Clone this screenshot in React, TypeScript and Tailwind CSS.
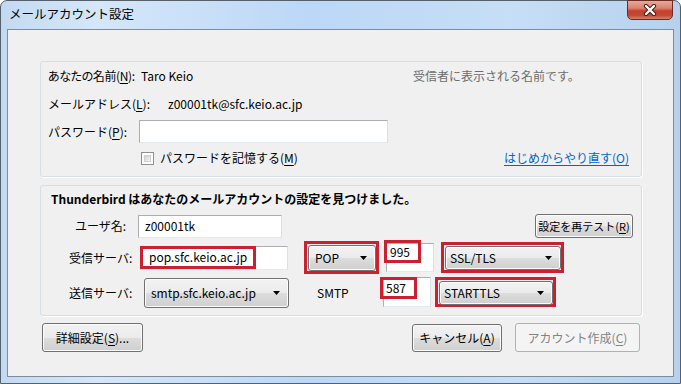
import React from 'react';

const btn =
  'border border-[#707070] rounded-[3px] bg-[linear-gradient(#f2f2f2,#ebebeb_50%,#dddddd_50%,#cfcfcf)] shadow-[inset_0_0_0_1px_#fcfcfc]';
const red = 'border-[3px] border-[#cc1f2f]';
const input = 'bg-white border border-[#abadb3] border-r-[#dbdfe6] border-b-[#e3e9ef]';

function Arrow() {
  return (
    <svg width="7" height="4" viewBox="0 0 7 4" className="shrink-0">
      <path d="M0 0h7L3.5 4z" fill="#000" />
    </svg>
  );
}

function U({ c }: { c: string }) {
  return <span className="underline underline-offset-2">{c}</span>;
}

function Dropdown({ label, w, h, padL, className = '' }: { label: string; w: string; h: string; padL: string; className?: string }) {
  return (
    <div className={`${btn} ${w} ${h} ${padL} pr-[8px] flex items-center justify-between whitespace-nowrap ${className}`}>
      <span>{label}</span>
      <Arrow />
    </div>
  );
}

export default function App() {
  return (
    <div className="w-[681px] h-[384px] bg-white overflow-hidden font-['Noto_Sans_CJK_JP',sans-serif] text-[12px] leading-none text-black whitespace-nowrap">
      <div className="w-full h-full rounded-t-[7px] border border-[#56606c] bg-[linear-gradient(90deg,#c2daf1,#d5e7f9_14%,#bcd8f6_45%,#c6def6_75%,#b7d1ed)] flex flex-col relative">
        {/* title bar */}
        <div className="h-[28px] flex items-center pl-[8px] pb-[1px] text-[12.5px]">メールアカウント設定</div>
        {/* close button */}
        <div className="absolute top-[-1px] right-[7px] w-[46px] h-[20px] rounded-b-[5px] border border-[#6a2b22] bg-[linear-gradient(#e9a99a,#d98170_40%,#c7402b_55%,#c24a35_80%,#d6826b)] flex items-center justify-center">
          <svg width="14" height="12" viewBox="0 0 14 12">
            <path d="M3 2l8 8M11 2l-8 8" stroke="#3b1a15" strokeWidth="4.2" strokeLinecap="round" />
            <path d="M3 2l8 8M11 2l-8 8" stroke="#fff" strokeWidth="2.4" strokeLinecap="round" />
          </svg>
        </div>

        {/* client area */}
        <div className="flex-1 mx-[6px] mb-[6px] border border-[#7f8c9b] bg-[#f0f0f0] flex flex-col">
          {/* account group */}
          <div className="ml-[32px] mt-[31px] w-[602px] h-[116px] border border-[#d5dfe5] rounded-[3px] shadow-[1px_1px_0_#fff] flex flex-col">
            <div className="mt-[3px] h-[22px] flex items-center pl-[7px]">
              <span className="w-[93px] shrink-0 [font-feature-settings:'palt'] tracking-[-0.4px]">あなたの名前(<U c="N" />):</span>
              <span className="w-[272px] shrink-0">Taro Keio</span>
              <span className="text-[#6d6d6d]">受信者に表示される名前です。</span>
            </div>
            <div className="mt-[6px] h-[22px] flex items-center pl-[7px]">
              <span className="w-[120px] shrink-0">メールアドレス(<U c="L" />):</span>
              <span>z00001tk@sfc.keio.ac.jp</span>
            </div>
            <div className="mt-[5px] h-[23px] flex items-center pl-[7px]">
              <span className="w-[91px] shrink-0">パスワード(<U c="P" />):</span>
              <div className={`${input} w-[249px] h-[23px]`} />
            </div>
            <div className="mt-[4px] h-[22px] flex items-center pl-[100px] pr-[12px]">
              <div className="w-[13px] h-[13px] border border-[#8e8f8f] bg-white p-[2px]">
                <div className="w-full h-full border border-[#d0d0d0] bg-[linear-gradient(135deg,#cbcfd5,#f6f6f6)]" />
              </div>
              <span className="ml-[6px]">パスワードを記憶する(<U c="M" />)</span>
              <span className="ml-auto text-[#0066cc] underline underline-offset-2">はじめからやり直す(O)</span>
            </div>
          </div>

          {/* server group */}
          <div className="ml-[32px] mt-[8px] w-[602px] h-[131px] border border-[#d5dfe5] rounded-[3px] shadow-[1px_1px_0_#fff] flex flex-col">
            <div className="mt-[3px] h-[20px] flex items-center pl-[10px] font-bold">
              Thunderbird はあなたのメールアカウントの設定を見つけました。
            </div>
            <div className="mt-[5px] h-[24px] flex items-center">
              <span className="ml-[34px] w-[63px] shrink-0">ユーザ名:</span>
              <div className={`${input} w-[144px] h-[23px] flex items-center pl-[6px]`}>z00001tk</div>
              <div className={`${btn} ml-auto mr-[8px] w-[98px] h-[24px] flex items-center justify-center text-[11px]`}>
                設定を再テスト(<U c="R" />)
              </div>
            </div>
            <div className="mt-[3px] h-[33px] flex items-center">
              <span className="ml-[28px] w-[71px] shrink-0">受信サーバ:</span>
              <div className={`${input} w-[148px] h-[24px] flex`}>
                <span className={`${red} h-[23px] -mt-[1px] -ml-[1px] flex items-center pl-[6px] pr-[6px]`}>pop.sfc.keio.ac.jp</span>
              </div>
              <div className={`${red} ml-[16px] w-[75px] h-[33px] p-[1px] pr-0`}>
                <Dropdown label="POP" w="w-[68px]" h="h-[26px]" padL="pl-[6px]" />
              </div>
              <div className={`${input} ml-[7px] w-[48px] h-[29px] self-end mb-[2px] flex items-start`}>
                <span className={`${red} -ml-[3px] -mt-[4px] w-[37px] h-[23px] flex items-center pl-[3px]`}>995</span>
              </div>
              <div className={`${red} ml-[7px] w-[123px] h-[31px] p-[1px] pr-0`}>
                <Dropdown label="SSL/TLS" w="w-[116px]" h="h-[24px]" padL="pl-[4px]" />
              </div>
            </div>
            <div className="mt-[3px] h-[31px] flex items-center">
              <span className="ml-[28px] w-[75px] shrink-0">送信サーバ:</span>
              <Dropdown label="smtp.sfc.keio.ac.jp" w="w-[145px]" h="h-[30px]" padL="pl-[6px]" />
              <span className="ml-[28px] w-[66px] shrink-0">SMTP</span>
              <div className={`${input} w-[48px] h-[30px] self-start flex items-start`}>
                <span className={`${red} -ml-[4px] -mt-[1px] w-[37px] h-[22px] flex items-center pl-[3px]`}>587</span>
              </div>
              <div className={`${red} ml-[4px] w-[121px] h-[30px] self-start p-[1px] pr-0`}>
                <Dropdown label="STARTTLS" w="w-[114px]" h="h-[24px]" padL="pl-[4px]" />
              </div>
            </div>
          </div>

          {/* bottom buttons */}
          <div className="mt-[7px] h-[29px] flex items-center pl-[34px] pr-[33px]">
            <div className={`${btn} w-[101px] h-[29px] flex items-center justify-center`}>
              詳細設定(<U c="S" />)...
            </div>
            <div className={`${btn} ml-auto w-[90px] h-[28px] flex items-center justify-center`}>
              キャンセル(<U c="A" />)
            </div>
            <div className="ml-[13px] w-[125px] h-[29px] border border-[#adb2b5] rounded-[3px] bg-[#f4f4f4] text-[#838383] flex items-center justify-center">
              アカウント作成(<U c="C" />)
            </div>
          </div>
        </div>
      </div>
    </div>
  );
}
